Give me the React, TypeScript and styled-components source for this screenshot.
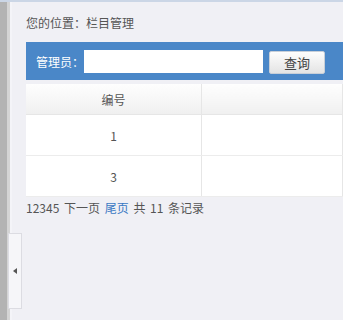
import styled, { createGlobalStyle } from 'styled-components';

const GlobalStyle = createGlobalStyle`
  html, body {
    margin: 0;
    padding: 0;
    width: 343px;
    height: 320px;
    overflow: hidden;
    background: #f0f0f5;
    font-family: "Microsoft YaHei", "Noto Sans CJK SC", "Liberation Sans", sans-serif;
    font-size: 12px;
    color: #555;
  }
`;

const rows = [{ id: 1 }, { id: 3 }];

export default function App() {
  return (
    <>
      <GlobalStyle />
      <Frame>
        <Splitter>
          <Toggle>
            <Arrow />
          </Toggle>
        </Splitter>
        <Main>
          <Crumb>您的位置：栏目管理</Crumb>
          <SearchBar>
            <Label>管理员：</Label>
            <Input type='text' />
            <QueryButton>查询</QueryButton>
          </SearchBar>
          <Table>
            <thead>
              <tr>
                <Th $w={175}>编号</Th>
                <Th />
              </tr>
            </thead>
            <tbody>
              {rows.map((r) => (
                <tr key={r.id}>
                  <Td>{r.id}</Td>
                  <Td />
                </tr>
              ))}
            </tbody>
          </Table>
          <Pager>
            12345 下一页 <PagerLink>尾页</PagerLink> 共 11 条记录
          </Pager>
        </Main>
      </Frame>
    </>
  );
}

const Frame = styled.div`
  display: flex;
  width: 343px;
  height: 320px;
  border-top: 2px solid #cbd6e6;
  box-sizing: border-box;
  overflow: hidden;
`;

const Splitter = styled.div`
  position: relative;
  width: 12px;
  flex-shrink: 0;
  border-left: 7px solid #b3b3b3;
  box-sizing: border-box;
  background: linear-gradient(to right, #d4d4d4 0, #d4d4d4 3px, #f4f4f8 3px);
`;

const Toggle = styled.div`
  position: absolute;
  left: 1px;
  top: 231px;
  width: 14px;
  height: 76px;
  border: 1px solid #dcdce2;
  background: #f6f6f9;
  display: flex;
  align-items: center;
  justify-content: flex-start;
  padding-left: 4px;
  box-sizing: border-box;
`;

const Arrow = styled.span`
  width: 0;
  height: 0;
  border-top: 3px solid transparent;
  border-bottom: 3px solid transparent;
  border-right: 4px solid #555;
`;

const Main = styled.div`
  flex: 1;
  padding: 12px 0 0 14px;
  display: flex;
  flex-direction: column;
  min-width: 0;
`;

const Crumb = styled.div`
  height: 28px;
  line-height: 18px;
  color: #555;
`;

const SearchBar = styled.div`
  display: flex;
  align-items: center;
  height: 38px;
  background: #4a87c8;
  padding-left: 10px;
  box-sizing: border-box;
`;

const Label = styled.span`
  color: #fff;
  font-size: 12px;
  width: 48px;
`;

const Input = styled.input`
  width: 179px;
  height: 23px;
  border: none;
  padding: 0 4px;
  box-sizing: border-box;
  background: #fff;
  outline: none;
`;

const QueryButton = styled.button`
  margin-left: 6px;
  width: 56px;
  height: 23px;
  margin-top: 2px;
  border: 1px solid #c8cfd8;
  border-radius: 2px;
  background: linear-gradient(#fdfdfd, #e4e4e4);
  color: #444;
  font-family: inherit;
  font-size: 13px;
  padding: 0;
`;

const Table = styled.table`
  margin-top: 4px;
  width: 100%;
  border-collapse: collapse;
  background: #fff;
`;

const Th = styled.th<{ $w?: number }>`
  width: ${(p) => (p.$w ? `${p.$w}px` : 'auto')};
  height: 30px;
  padding: 0;
  font-weight: normal;
  color: #555;
  background: linear-gradient(#fefefe, #f0f0f0);
  border-right: 1px solid #e6e6e6;
  border-bottom: 1px solid #e6e6e6;
`;

const Td = styled.td`
  height: 40px;
  padding: 0;
  text-align: center;
  color: #555;
  border-right: 1px solid #e6e6e6;
  border-bottom: 1px solid #ececec;
`;

const Pager = styled.div`
  margin-top: 2px;
  line-height: 18px;
  color: #555;
  word-spacing: 2px;
`;

const PagerLink = styled.a`
  color: #3a78c3;
  text-decoration: none;
`;
